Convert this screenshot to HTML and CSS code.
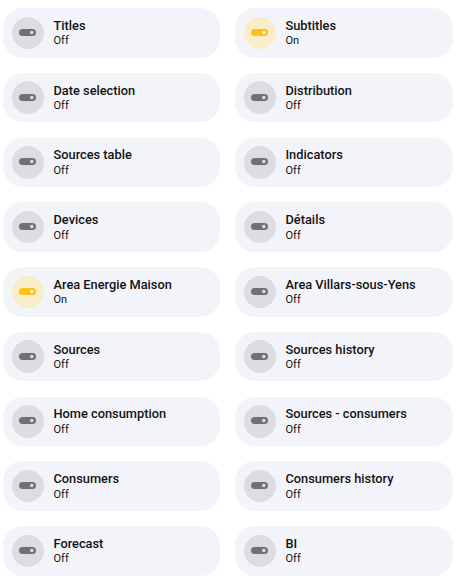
FILE: index.html
```html
<!DOCTYPE html>
<html>
<head>
<meta charset="utf-8">
<link rel="stylesheet" href="styles.css">
</head>
<body>
<div class="grid">
  <div class="tile"><span class="icon off"><svg viewBox="0 0 17 8"><rect x="0" y="0" width="17" height="7" rx="3.5"/><circle cx="12.8" cy="3.5" r="1.8"/></svg></span><div class="info"><div class="name">Titles</div><div class="state">Off</div></div></div>
  <div class="tile"><span class="icon on"><svg viewBox="0 0 17 8"><rect x="0" y="0" width="17" height="7" rx="3.5"/><circle cx="12.8" cy="3.5" r="1.8"/></svg></span><div class="info"><div class="name">Subtitles</div><div class="state">On</div></div></div>
  <div class="tile"><span class="icon off"><svg viewBox="0 0 17 8"><rect x="0" y="0" width="17" height="7" rx="3.5"/><circle cx="12.8" cy="3.5" r="1.8"/></svg></span><div class="info"><div class="name">Date selection</div><div class="state">Off</div></div></div>
  <div class="tile"><span class="icon off"><svg viewBox="0 0 17 8"><rect x="0" y="0" width="17" height="7" rx="3.5"/><circle cx="12.8" cy="3.5" r="1.8"/></svg></span><div class="info"><div class="name">Distribution</div><div class="state">Off</div></div></div>
  <div class="tile"><span class="icon off"><svg viewBox="0 0 17 8"><rect x="0" y="0" width="17" height="7" rx="3.5"/><circle cx="12.8" cy="3.5" r="1.8"/></svg></span><div class="info"><div class="name">Sources table</div><div class="state">Off</div></div></div>
  <div class="tile"><span class="icon off"><svg viewBox="0 0 17 8"><rect x="0" y="0" width="17" height="7" rx="3.5"/><circle cx="12.8" cy="3.5" r="1.8"/></svg></span><div class="info"><div class="name">Indicators</div><div class="state">Off</div></div></div>
  <div class="tile"><span class="icon off"><svg viewBox="0 0 17 8"><rect x="0" y="0" width="17" height="7" rx="3.5"/><circle cx="12.8" cy="3.5" r="1.8"/></svg></span><div class="info"><div class="name">Devices</div><div class="state">Off</div></div></div>
  <div class="tile"><span class="icon off"><svg viewBox="0 0 17 8"><rect x="0" y="0" width="17" height="7" rx="3.5"/><circle cx="12.8" cy="3.5" r="1.8"/></svg></span><div class="info"><div class="name">Détails</div><div class="state">Off</div></div></div>
  <div class="tile"><span class="icon on"><svg viewBox="0 0 17 8"><rect x="0" y="0" width="17" height="7" rx="3.5"/><circle cx="12.8" cy="3.5" r="1.8"/></svg></span><div class="info"><div class="name">Area Energie Maison</div><div class="state">On</div></div></div>
  <div class="tile"><span class="icon off"><svg viewBox="0 0 17 8"><rect x="0" y="0" width="17" height="7" rx="3.5"/><circle cx="12.8" cy="3.5" r="1.8"/></svg></span><div class="info"><div class="name">Area Villars-sous-Yens</div><div class="state">Off</div></div></div>
  <div class="tile"><span class="icon off"><svg viewBox="0 0 17 8"><rect x="0" y="0" width="17" height="7" rx="3.5"/><circle cx="12.8" cy="3.5" r="1.8"/></svg></span><div class="info"><div class="name">Sources</div><div class="state">Off</div></div></div>
  <div class="tile"><span class="icon off"><svg viewBox="0 0 17 8"><rect x="0" y="0" width="17" height="7" rx="3.5"/><circle cx="12.8" cy="3.5" r="1.8"/></svg></span><div class="info"><div class="name">Sources history</div><div class="state">Off</div></div></div>
  <div class="tile"><span class="icon off"><svg viewBox="0 0 17 8"><rect x="0" y="0" width="17" height="7" rx="3.5"/><circle cx="12.8" cy="3.5" r="1.8"/></svg></span><div class="info"><div class="name">Home consumption</div><div class="state">Off</div></div></div>
  <div class="tile"><span class="icon off"><svg viewBox="0 0 17 8"><rect x="0" y="0" width="17" height="7" rx="3.5"/><circle cx="12.8" cy="3.5" r="1.8"/></svg></span><div class="info"><div class="name">Sources - consumers</div><div class="state">Off</div></div></div>
  <div class="tile"><span class="icon off"><svg viewBox="0 0 17 8"><rect x="0" y="0" width="17" height="7" rx="3.5"/><circle cx="12.8" cy="3.5" r="1.8"/></svg></span><div class="info"><div class="name">Consumers</div><div class="state">Off</div></div></div>
  <div class="tile"><span class="icon off"><svg viewBox="0 0 17 8"><rect x="0" y="0" width="17" height="7" rx="3.5"/><circle cx="12.8" cy="3.5" r="1.8"/></svg></span><div class="info"><div class="name">Consumers history</div><div class="state">Off</div></div></div>
  <div class="tile"><span class="icon off"><svg viewBox="0 0 17 8"><rect x="0" y="0" width="17" height="7" rx="3.5"/><circle cx="12.8" cy="3.5" r="1.8"/></svg></span><div class="info"><div class="name">Forecast</div><div class="state">Off</div></div></div>
  <div class="tile"><span class="icon off"><svg viewBox="0 0 17 8"><rect x="0" y="0" width="17" height="7" rx="3.5"/><circle cx="12.8" cy="3.5" r="1.8"/></svg></span><div class="info"><div class="name">BI</div><div class="state">Off</div></div></div>
</div>
</body>
</html>
```
FILE: styles.css
```css
html, body {
  margin: 0;
  padding: 0;
  background: #ffffff;
}
body {
  font-family: Roboto, "Liberation Sans", sans-serif;
  color: #141414;
}
.grid {
  display: grid;
  grid-template-columns: 216.5px 217.7px;
  grid-auto-rows: 49.5px;
  column-gap: 15.5px;
  row-gap: 15.25px;
  padding: 8px 0 0 3px;
}
.tile {
  display: flex;
  align-items: center;
  gap: 9.5px;
  padding: 0 8px 0 8.5px;
  background: #f3f4f9;
  border-radius: 20px;
}
.icon {
  flex: none;
  width: 32.5px;
  height: 32.5px;
  border-radius: 50%;
  display: flex;
  align-items: center;
  justify-content: center;
}
.icon svg {
  width: 17px;
  height: 8px;
  display: block;
}
.icon.off { background: #dcdde2; }
.icon.off rect { fill: #6f7177; }
.icon.off circle { fill: #dcdde2; }
.icon.on { background: #faedc9; }
.icon.on rect { fill: #fcc21b; }
.icon.on circle { fill: #faedc9; }
.info {
  display: flex;
  flex-direction: column;
  min-width: 0;
  padding-top: 0.8px;
}
.name {
  font-size: 12.8px;
  font-weight: 500;
  line-height: 16px;
  white-space: nowrap;
  color: #131313;
}
.state {
  font-size: 11px;
  font-weight: 400;
  line-height: 14px;
  margin-top: 0.6px;
  color: #131313;
}
```
